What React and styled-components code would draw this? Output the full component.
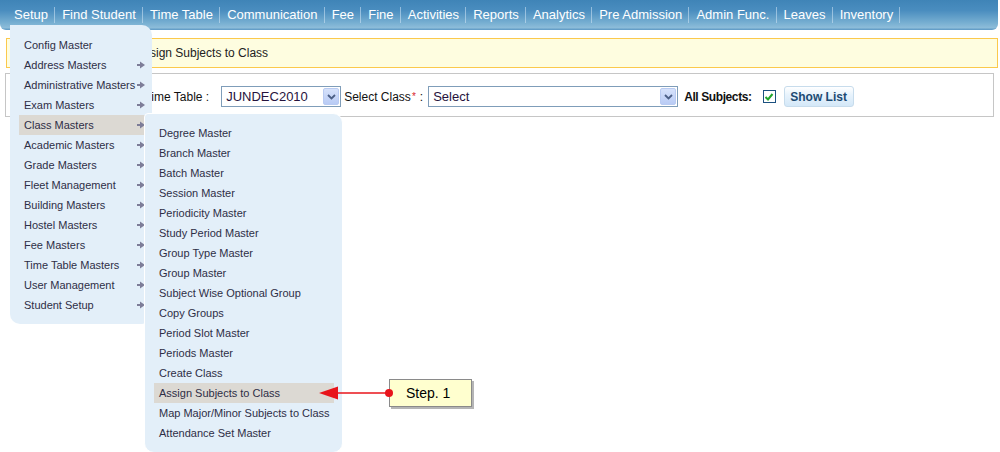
import React from "react";
import styled, { createGlobalStyle } from "styled-components";

const GlobalStyle = createGlobalStyle`
  html, body { margin: 0; padding: 0; background: #fff; }
  body { font-family: "Liberation Sans", Arial, sans-serif; }
  * { box-sizing: border-box; }
`;

const Page = styled.div`
  position: relative;
  width: 1000px;
  height: 452px;
  overflow: hidden;
  background: #fff;
`;

const NavBar = styled.nav`
  display: flex;
  align-items: center;
  height: 30px;
  width: 998px;
  padding-left: 7px;
  padding-bottom: 1px;
  border-radius: 0 0 6px 6px;
  background: linear-gradient(to bottom, #3f84b7 0%, #4a8dbf 35%, #76aed1 75%, #8cbcd9 92%, #5b97c4 100%);
`;

const NavItem = styled.span`
  padding: 0 6.2px 0 7px;
  color: #fff;
  font-size: 13px;
  line-height: 15px;
  white-space: nowrap;
`;

const NavSep = styled.span`
  width: 1px;
  height: 16px;
  background: rgba(210, 230, 245, 0.55);
`;

const Notice = styled.div`
  display: flex;
  align-items: center;
  height: 30px;
  margin: 8px 2px 0 6px;
  padding-left: 129px;
  background: #fefde0;
  border: 1px solid #fbc94c;
  font-size: 12px;
  color: #222;
`;

const FormBox = styled.div`
  display: flex;
  align-items: center;
  height: 44px;
  margin: 5px 6px 0 5px;
  padding: 3px 0 0 102px;
  border: 1px solid #c6c6c6;
  font-size: 12px;
  color: #111;
`;

const Label = styled.span`
  font-size: 12px;
  font-weight: ${(p) => (p.$bold ? 700 : 400)};
  letter-spacing: ${(p) => (p.$bold ? "-0.4px" : "0")};
  margin: 0 ${(p) => p.$mr || 0}px 0 ${(p) => p.$ml || 0}px;
  white-space: nowrap;
`;

const Req = styled.sup`
  color: #d8262d;
  font-size: 10px;
  margin-left: 1px;
  margin-right: 4px;
`;

const SelectBox = styled.div`
  display: flex;
  align-items: center;
  justify-content: space-between;
  width: ${(p) => p.$w}px;
  height: 21px;
  padding: 0 1px 0 4px;
  border: 1px solid #7f9db9;
  background: #fff;
  font-size: 13px;
  color: #26133d;
`;

const DropBtn = styled.span`
  display: flex;
  align-items: center;
  justify-content: center;
  width: 16px;
  height: 17px;
  border: 1px solid #b9cbf2;
  border-radius: 2px;
  background: linear-gradient(to bottom, #d6e2fb, #b9cbf5);
`;

const Check = styled.span`
  display: flex;
  align-items: center;
  justify-content: center;
  width: 13px;
  height: 13px;
  margin-left: 11px;
  border: 1px solid #1c5180;
  background: #fff;
`;

const Button = styled.button`
  height: 21px;
  width: 70px;
  margin-left: 8px;
  padding: 0;
  border: 1px solid #c7dcec;
  border-radius: 3px;
  background: linear-gradient(to bottom, #ffffff, #e8f3fc 40%, #d4e8f8);
  font-family: "Liberation Sans", Arial, sans-serif;
  font-size: 12px;
  font-weight: 700;
  color: #1c4a72;
`;

const MainMenu = styled.ul`
  position: absolute;
  left: 10px;
  top: 25px;
  width: 142px;
  margin: 0;
  padding: 10px 7px 9px 9px;
  list-style: none;
  background: #e3eff9;
  border-radius: 0 10px 10px 10px;
`;

const SubMenu = styled.ul`
  position: absolute;
  left: 125px;
  top: -2px;
  width: 199px;
  margin: 0;
  padding: 9px 8px 9px 9px;
  list-style: none;
  background: #e3eff9;
  border: 1px solid #fff;
  border-radius: 4px 10px 10px 10px;
  z-index: 2;
`;

const MenuItem = styled.li`
  position: relative;
  display: flex;
  align-items: center;
  justify-content: space-between;
  height: 20px;
  padding: 0 0 0 5px;
  font-size: 11px;
  color: #2e2e46;
  white-space: nowrap;
  background: ${(p) => (p.$active ? "#dcd9d3" : "transparent")};
`;

const Callout = styled.div`
  position: absolute;
  left: 389px;
  top: 379px;
  width: 83px;
  height: 28px;
  display: flex;
  align-items: center;
  padding-left: 16px;
  background: #ffffcf;
  border: 1px solid #8a8a8a;
  box-shadow: 2px 2px 0 #b5b5b5;
  font-size: 14px;
  color: #000;
`;

const Pointer = styled.svg`
  position: absolute;
  left: 316px;
  top: 384px;
  z-index: 3;
`;

const Arrow = () => (
  <svg width="8" height="8" viewBox="0 0 8 8">
    <rect x="0" y="3" width="4" height="2" fill="#7d7d98" />
    <path d="M3 0.5 L8 4 L3 7.5 Z" fill="#7d7d98" />
  </svg>
);

const Chevron = () => (
  <svg width="9" height="6" viewBox="0 0 9 6">
    <path d="M1 1 L4.5 4.5 L8 1" fill="none" stroke="#4b5f86" strokeWidth="1.8" />
  </svg>
);

const Tick = () => (
  <svg width="10" height="10" viewBox="0 0 10 10">
    <path d="M1.5 5 L4 7.5 L8.5 2" fill="none" stroke="#21a52b" strokeWidth="2" />
  </svg>
);

const navItems = [
  "Setup", "Find Student", "Time Table", "Communication", "Fee", "Fine",
  "Activities", "Reports", "Analytics", "Pre Admission", "Admin Func.", "Leaves", "Inventory",
];

const mainItems = [
  ["Config Master", false],
  ["Address Masters", true],
  ["Administrative Masters", true],
  ["Exam Masters", true],
  ["Class Masters", true],
  ["Academic Masters", true],
  ["Grade Masters", true],
  ["Fleet Management", true],
  ["Building Masters", true],
  ["Hostel Masters", true],
  ["Fee Masters", true],
  ["Time Table Masters", true],
  ["User Management", true],
  ["Student Setup", true],
];

const subItems = [
  "Degree Master", "Branch Master", "Batch Master", "Session Master",
  "Periodicity Master", "Study Period Master", "Group Type Master", "Group Master",
  "Subject Wise Optional Group", "Copy Groups", "Period Slot Master", "Periods Master",
  "Create Class", "Assign Subjects to Class", "Map Major/Minor Subjects to Class",
  "Attendance Set Master",
];

export default function App() {
  return (
    <Page>
      <GlobalStyle />
      <NavBar>
        {navItems.map((n) => (
          <React.Fragment key={n}>
            <NavItem>{n}</NavItem>
            <NavSep />
          </React.Fragment>
        ))}
      </NavBar>

      <Notice>Assign Subjects to Class</Notice>

      <FormBox>
        <Label $mr={12}>Select Time Table :</Label>
        <SelectBox $w={120}>
          <span>JUNDEC2010</span>
          <DropBtn><Chevron /></DropBtn>
        </SelectBox>
        <Label $ml={3}>Select Class</Label>
        <Req>*</Req>
        <Label $mr={5}>:</Label>
        <SelectBox $w={250}>
          <span>Select</span>
          <DropBtn><Chevron /></DropBtn>
        </SelectBox>
        <Label $bold $ml={6}>All Subjects:</Label>
        <Check><Tick /></Check>
        <Button>Show List</Button>
      </FormBox>

      <MainMenu>
        {mainItems.map(([label, hasSub]) => {
          const active = label === "Class Masters";
          return (
            <MenuItem key={label} $active={active}>
              <span>{label}</span>
              {hasSub && <Arrow />}
              {active && (
                <SubMenu>
                  {subItems.map((s) => (
                    <MenuItem key={s} $active={s === "Assign Subjects to Class"}>
                      <span>{s}</span>
                    </MenuItem>
                  ))}
                </SubMenu>
              )}
            </MenuItem>
          );
        })}
      </MainMenu>

      <Pointer width="80" height="18" viewBox="0 0 80 18">
        <line x1="20" y1="9" x2="73" y2="9" stroke="#e8141b" strokeWidth="1.5" />
        <path d="M3 9 L22 2.5 L22 15.5 Z" fill="#e8141b" />
        <circle cx="73" cy="9" r="4" fill="#e8141b" />
      </Pointer>
      <Callout>Step. 1</Callout>
    </Page>
  );
}
